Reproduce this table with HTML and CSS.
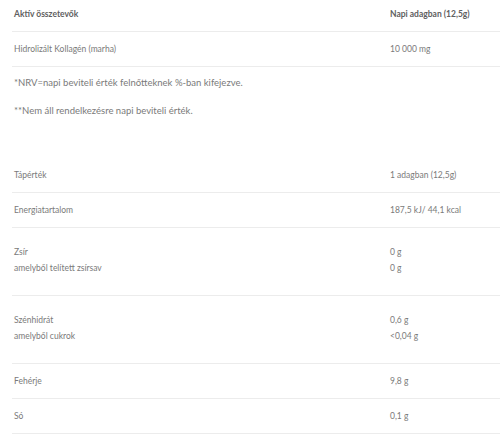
FILE: index.html
```html
<!DOCTYPE html>
<html lang="hu">
<head>
<meta charset="utf-8">
<link rel="stylesheet" href="styles.css">
</head>
<body>
<div class="page">
  <div class="table">
    <div class="row head">
      <div class="cell">Aktív összetevők</div>
      <div class="cell">Napi adagban (12,5g)</div>
    </div>
    <div class="row">
      <div class="cell">Hidrolizált Kollagén (marha)</div>
      <div class="cell">10 000 mg</div>
    </div>
  </div>
  <p class="note first">*NRV=napi beviteli érték felnőtteknek %-ban kifejezve.</p>
  <p class="note">**Nem áll rendelkezésre napi beviteli érték.</p>
  <div class="table second">
    <div class="row">
      <div class="cell">Tápérték</div>
      <div class="cell">1 adagban (12,5g)</div>
    </div>
    <div class="row">
      <div class="cell">Energiatartalom</div>
      <div class="cell">187,5 kJ/ 44,1 kcal</div>
    </div>
    <div class="row double">
      <div class="cell">Zsír<br>amelyből telített zsírsav</div>
      <div class="cell">0 g<br>0 g</div>
    </div>
    <div class="row double">
      <div class="cell">Szénhidrát<br>amelyből cukrok</div>
      <div class="cell">0,6 g<br>&lt;0,04 g</div>
    </div>
    <div class="row">
      <div class="cell">Fehérje</div>
      <div class="cell">9,8 g</div>
    </div>
    <div class="row">
      <div class="cell">Só</div>
      <div class="cell">0,1 g</div>
    </div>
  </div>
</div>
</body>
</html>
```
FILE: styles.css
```css
* { box-sizing: border-box; }
html, body {
  margin: 0;
  padding: 0;
  background: #fff;
}
body {
  font-family: Lato, "Open Sans", sans-serif;
  color: #7a7a7a;
}
.page {
  padding-left: 12px;
}
.table {
  display: flex;
  flex-direction: column;
}
.row {
  display: grid;
  grid-template-columns: 376px 1fr;
  border-bottom: 1px solid #ececec;
  padding: 10px 0;
  font-size: 8.5px;
  line-height: 14px;
}
.row.head {
  padding-top: 7px;
  font-weight: bold;
  color: #606060;
}
.row.double {
  padding: 16px 0 19px;
  line-height: 16px;
}
.cell {
  padding-left: 2px;
}
.note {
  margin: 12px 0 0;
  padding-left: 2px;
  font-size: 9.5px;
  line-height: 16px;
}
.note.first {
  margin-top: 8px;
}
.table.second {
  margin-top: 39px;
}
```
